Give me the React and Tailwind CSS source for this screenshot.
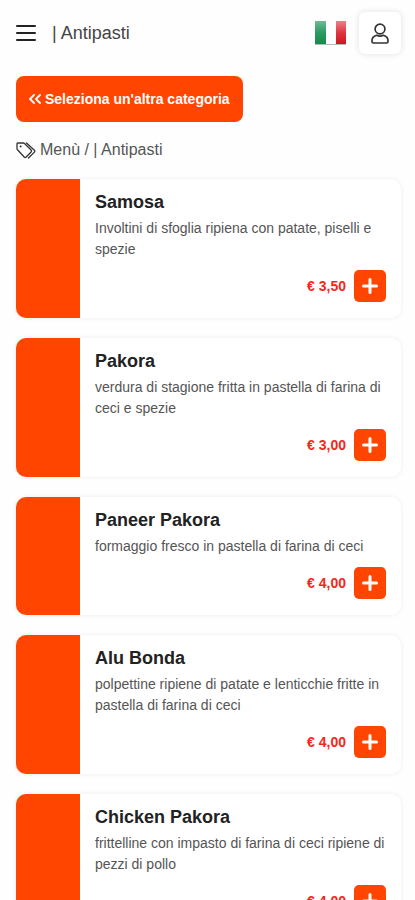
import React from 'react';

const dishes = [
  { name: 'Samosa', text: 'Involtini di sfoglia ripiena con patate, piselli e spezie', price: '€ 3,50' },
  { name: 'Pakora', text: 'verdura di stagione fritta in pastella di farina di ceci e spezie', price: '€ 3,00' },
  { name: 'Paneer Pakora', text: 'formaggio fresco in pastella di farina di ceci', price: '€ 4,00' },
  { name: 'Alu Bonda', text: 'polpettine ripiene di patate e lenticchie fritte in pastella di farina di ceci', price: '€ 4,00' },
  { name: 'Chicken Pakora', text: 'frittelline con impasto di farina di ceci ripiene di pezzi di pollo', price: '€ 4,00' },
];

function MenuIcon() {
  return (
    <svg width="20" height="18" viewBox="0 0 20 18" stroke="#222" strokeWidth="2" strokeLinecap="round" aria-hidden="true">
      <path d="M1 2h18M1 9h18M1 16h18" />
    </svg>
  );
}

function Flag() {
  return (
    <svg width="32" height="24" viewBox="0 0 32 24" aria-hidden="true">
      <defs>
        <linearGradient id="green" x1="0" y1="0" x2="0" y2="1">
          <stop offset="0" stopColor="#6dbb93" />
          <stop offset="0.5" stopColor="#2c9a63" />
          <stop offset="1" stopColor="#168a4c" />
        </linearGradient>
        <linearGradient id="red" x1="0" y1="0" x2="0" y2="1">
          <stop offset="0" stopColor="#ec8087" />
          <stop offset="0.5" stopColor="#dd3842" />
          <stop offset="1" stopColor="#d01522" />
        </linearGradient>
      </defs>
      <rect x="0" y="0" width="11" height="23" fill="url(#green)" />
      <rect x="11" y="0" width="10" height="23" fill="#fefefe" />
      <rect x="21" y="0" width="10" height="23" fill="url(#red)" />
      <path d="M0 23.5h31" stroke="#b9b9b9" strokeWidth="1" />
    </svg>
  );
}

function UserIcon() {
  return (
    <svg width="18" height="21" viewBox="0 0 18 21" fill="none" stroke="#333" strokeWidth="1.7" strokeLinejoin="round" aria-hidden="true">
      <circle cx="9" cy="6" r="4.900" />
      <path d="M5.600 12.300C3 13 1 15 1 17.600v.9c0 .9.600 1.500 1.500 1.500h13c.9 0 1.500-.6 1.500-1.500v-.9c0-2.600-2-4.600-4.600-5.300-1.100.6-2.200.9-3.400.9s-2.300-.3-3.400-.9z" />
    </svg>
  );
}

function TagsIcon() {
  return (
    <svg width="20" height="17" viewBox="0 0 20 17" fill="none" stroke="#333" strokeWidth="1.3" strokeLinejoin="round" strokeLinecap="round" aria-hidden="true">
      <path d="M1 1.800V6.500c0 .5.2.9.5 1.200l6.700 7.300c.6.6 1.400.6 2 0l4.900-5c.6-.6.6-1.400 0-2L8.500 1.500C8.200 1.200 7.800 1 7.300 1H1.800C1.300 1 1 1.300 1 1.800z" />
      <path d="M10.500 1l7.900 7.200c.6.600.6 1.300 0 1.900L12.500 16" />
      <circle cx="4.600" cy="4.600" r="1" fill="#333" stroke="none" />
    </svg>
  );
}

function ChevronsIcon() {
  return (
    <svg width="12" height="10" viewBox="0 0 12 10" fill="none" stroke="#fff" strokeWidth="1.8" strokeLinecap="round" strokeLinejoin="round" aria-hidden="true">
      <path d="M5 1L1 5l4 4M11 1L7 5l4 4" />
    </svg>
  );
}

function PlusIcon() {
  return (
    <svg width="16" height="16" viewBox="0 0 16 16" stroke="#fff" strokeWidth="3" strokeLinecap="round" aria-hidden="true">
      <path d="M8 1.500v13M1.500 8h13" />
    </svg>
  );
}

function DishCard({ dish }) {
  return (
    <li className="flex overflow-hidden rounded-[10px] bg-white shadow-[0_0_5px_rgba(0,0,0,0.07)]">
      <div className="w-16 shrink-0 bg-[#ff4500]" />
      <div className="min-w-0 grow px-[15px] pt-[11px] pb-4">
        <h2 className="text-[18px] leading-6 font-bold text-[#222]">{dish.name}</h2>
        <p className="mt-1 text-[14px] leading-[21px] text-[#555]">{dish.text}</p>
        <div className="mt-[10px] flex items-center justify-end gap-2">
          <span className="text-[14px] leading-5 font-bold text-[#f5271a]">{dish.price}</span>
          <button type="button" aria-label={`Aggiungi ${dish.name}`} className="flex h-8 w-8 items-center justify-center rounded-[5px] bg-[#ff4500]">
            <PlusIcon />
          </button>
        </div>
      </div>
    </li>
  );
}

export default function App() {
  return (
    <div className="min-h-screen bg-[#fefefe] pb-5 font-['Liberation_Sans',Arial,sans-serif]">
      <header className="flex items-center pt-3 pr-[14px] pl-4">
        <button type="button" aria-label="Apri menu" className="flex">
          <MenuIcon />
        </button>
        <h1 className="ml-4 grow text-[18px] leading-6 text-[#444]">| Antipasti</h1>
        <button type="button" aria-label="Lingua: italiano" className="flex">
          <Flag />
        </button>
        <button type="button" aria-label="Profilo" className="ml-3 flex h-[42px] w-[42px] items-center justify-center rounded-[6px] bg-white shadow-[0_0_6px_rgba(0,0,0,0.12)]">
          <UserIcon />
        </button>
      </header>
      <main className="pt-[22px] pr-[14px] pl-4">
        <button type="button" className="flex h-[46px] items-center gap-1 rounded-[8px] bg-[#ff4500] px-[13px] text-[14px] leading-5 font-bold text-white">
          <ChevronsIcon />
          Seleziona un'altra categoria
        </button>
        <p className="mt-4 flex items-center gap-1 text-[16px] leading-6 text-[#555]">
          <TagsIcon />
          Menù / | Antipasti
        </p>
        <ul className="mt-[17px] flex flex-col gap-5">
          {dishes.map((dish) => (
            <DishCard key={dish.name} dish={dish} />
          ))}
        </ul>
      </main>
    </div>
  );
}
